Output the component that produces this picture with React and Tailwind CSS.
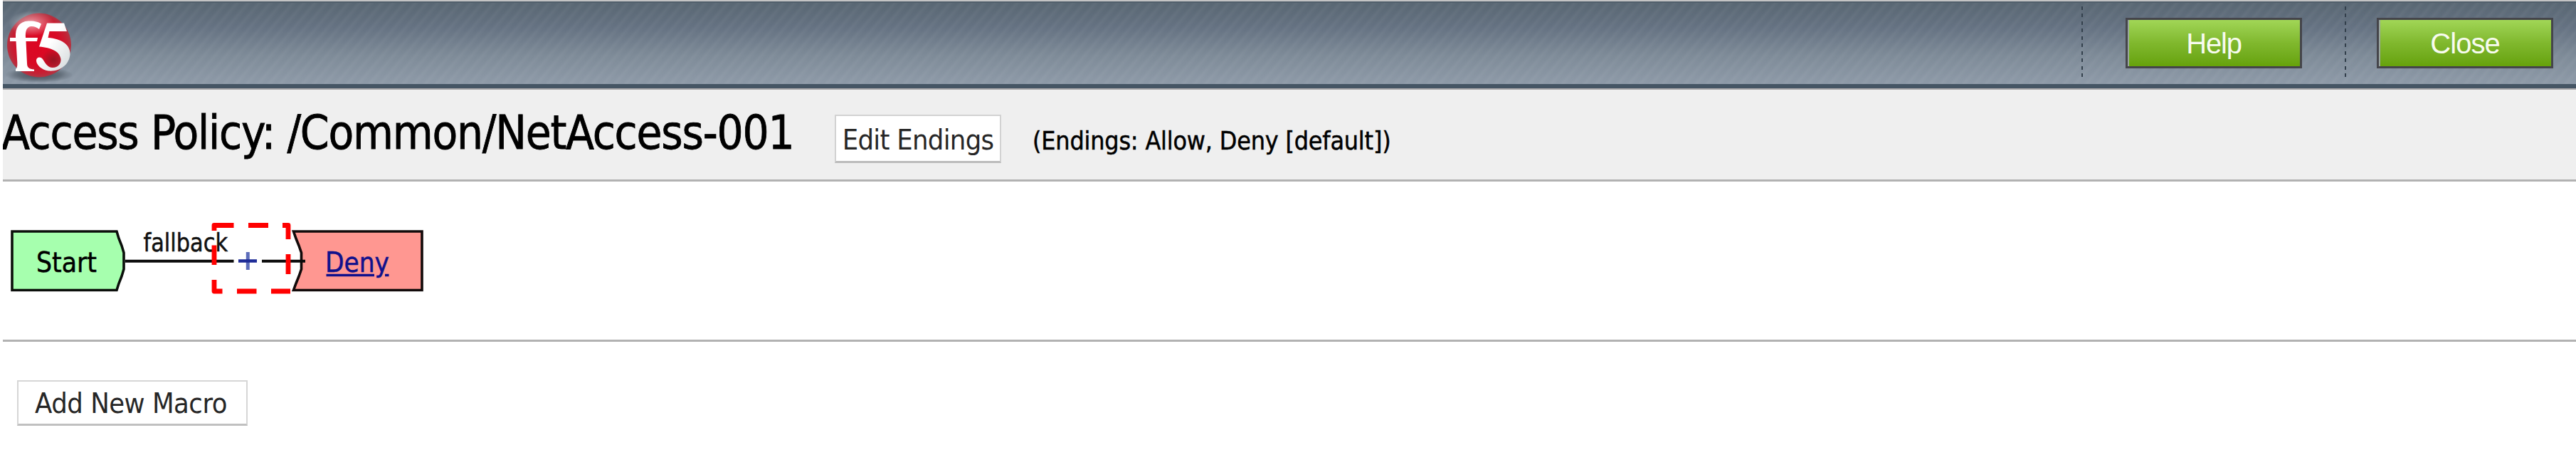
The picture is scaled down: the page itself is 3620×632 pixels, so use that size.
function Logo() {
  return (
    <svg className="block h-[116px] w-[110px]" viewBox="4 3 110 116">
      <defs>
        <radialGradient id="ball" cx="0.5" cy="0.5" r="0.52">
          <stop offset="0" stopColor="#dc0722" />
          <stop offset="0.6" stopColor="#d80a25" />
          <stop offset="0.85" stopColor="#c42235" />
          <stop offset="1" stopColor="#a93c48" />
        </radialGradient>
        <radialGradient id="shine" cx="0.5" cy="0.5" r="0.5">
          <stop offset="0" stopColor="#fff" stopOpacity="0.6" />
          <stop offset="1" stopColor="#fff" stopOpacity="0" />
        </radialGradient>
        <radialGradient id="shade" cx="0.5" cy="0.5" r="0.5">
          <stop offset="0" stopColor="#39434d" stopOpacity="0.85" />
          <stop offset="0.6" stopColor="#39434d" stopOpacity="0.5" />
          <stop offset="1" stopColor="#39434d" stopOpacity="0" />
        </radialGradient>
        <radialGradient id="dark" cx="0.5" cy="0.5" r="0.5">
          <stop offset="0" stopColor="#7a1a22" stopOpacity="0.7" />
          <stop offset="1" stopColor="#7a1a22" stopOpacity="0" />
        </radialGradient>
        <linearGradient id="five" x1="0" y1="0" x2="1" y2="1">
          <stop offset="0.4" stopColor="#ffffff" />
          <stop offset="1" stopColor="#d3d8da" />
        </linearGradient>
      </defs>
      <ellipse cx="55" cy="104" rx="48" ry="11" fill="url(#shade)" />
      <circle cx="55" cy="62.500" r="45" fill="url(#ball)" />
      <ellipse cx="44" cy="32" rx="32" ry="18" fill="url(#shine)" />
      <ellipse cx="75" cy="83" rx="17" ry="15" fill="url(#dark)" />
      <path d="M14 52H22C21 38 27 29 40 28.500C48 28 55 30 58 32.500L55 40C51 37 47 35.500 43.500 36C37 37 35.500 43 36 52H53L52 57H36.500L38 88C38 94 41 96 48 96.500V99H22V96C24 95 24.500 92 24.300 87L22.500 57H14Z" fill="#fff" />
      <path d="M66 31.500H90L94 43H69.500L67.500 52C86 53 99 62 98.500 75C97.500 90 84 100 68 98.500C58 97 51 90 51 84C51 79 57 78 60 82C64 88 67 94 74 94C82 94 86 88 85.500 82C84 71 72 66 55 64.500Z" fill="url(#five)" />
    </svg>
  );
}

function BannerButton({ label, tracking }) {
  return (
    <button className="flex h-[71px] w-[248px] items-center justify-center border-[3px] border-[#45454b] bg-linear-to-b from-[#a1d656] via-[#80b82d] to-[#66a209] font-['Liberation_Sans',Arial,sans-serif] text-[40px] leading-[60px] text-[#f7fbef] shadow-[inset_2px_0_0_#9aa59f]">
      <span className={tracking}>{label}</span>
    </button>
  );
}

function Separator() {
  return (
    <div className="h-[101px] w-[2px] bg-[repeating-linear-gradient(to_bottom,#33404c_0px,#33404c_5px,transparent_5px,transparent_10.5px)]" />
  );
}

function Flow() {
  return (
    <svg
      className="block h-[222px] w-[620px] font-['DejaVu_Sans_Condensed','DejaVu_Sans',sans-serif]"
      viewBox="4 255 620 222"
    >
      <path d="M17 325H164L167 335L171 345L174 355V378L171 388L167 398L164 407.500H17Z" fill="#a6ffae" stroke="#0b0f0b" strokeWidth="3.600" />
      <text x="51" y="382" fontSize="39.500" textLength="85" lengthAdjust="spacingAndGlyphs" stroke="#000" strokeWidth="0.5">Start</text>
      <path d="M412.500 325H593V407.500H412.500L416 398L420 388L423.500 378V355L420 345L416 335Z" fill="#ff9791" stroke="#120a0a" strokeWidth="3.600" />
      <path d="M176 366.700H328.500M368 366.700H429" stroke="#0a0a0a" strokeWidth="4" />
      <path d="M348.300 354V379" stroke="#5c6cba" strokeWidth="5" />
      <path d="M335 366.500H361" stroke="#1c2a96" strokeWidth="4.500" />
      <text x="201.500" y="353" fontSize="35" textLength="118.500" lengthAdjust="spacingAndGlyphs" fill="#111" stroke="#111" strokeWidth="0.5">fallback</text>
      <a>
        <text x="457" y="382" fontSize="39.500" textLength="90" lengthAdjust="spacingAndGlyphs" fill="#10108c" stroke="#10108c" strokeWidth="0.5">Deny</text>
        <path d="M458.500 386.500H526M541 386.500H546.500" stroke="#10108c" strokeWidth="3.500" />
      </a>
      <path
        d="M301 324V316.500H328.500M349 316.500H377M397 316.500H405V336M405 357V385M301 344.500V372M301 393V409H312.500M333 409H360.500M381 409H408"
        fill="none"
        stroke="#ff0000"
        strokeWidth="6.800"
        strokeLinejoin="round"
      />
    </svg>
  );
}

export default function App() {
  return (
    <div className="h-[632px] w-[3620px] overflow-hidden bg-white pl-1 font-['DejaVu_Sans_Condensed','DejaVu_Sans',sans-serif] text-black">
      <header className="h-[126px] border-t-2 border-b-2 border-t-[#c4c4c4] border-b-[#a9a7a9]">
        <div className="flex h-[122px] justify-between border-t-2 border-b-[6px] border-t-[#515f6b] border-b-[#455564] bg-[repeating-linear-gradient(130deg,rgba(255,255,255,0.04)_0px,rgba(255,255,255,0)_5px,rgba(255,255,255,0)_8px,rgba(255,255,255,0.04)_12px),linear-gradient(to_bottom,#596773,#657282_30%,#7e8b98_65%,#8e9aa8)]">
          <Logo />
          <div className="flex pt-[5px] pr-[32px]">
            <Separator />
            <div className="pt-4 pr-[60px] pl-[60px]">
              <BannerButton label="Help" tracking="tracking-[-1.2px]" />
            </div>
            <Separator />
            <div className="pt-4 pl-[43px]">
              <BannerButton label="Close" tracking="tracking-[-1px]" />
            </div>
          </div>
        </div>
      </header>

      <section className="flex h-[129px] items-start overflow-hidden border-b-[3px] border-[#b2b2b2] bg-[#efefef]">
        <h1 className="mt-[21px] w-[1169px] -indent-[2px] text-[65px] leading-[80px] tracking-[-1.25px] whitespace-nowrap [-webkit-text-stroke:0.8px_#000]">
          Access Policy: /Common/NetAccess-001
        </h1>
        <button className="mt-[35px] h-[68px] w-[234px] border-2 border-b-3 border-[#d2d2d2] border-b-[#bcbcbc] bg-white text-[39.500px] leading-[66px] tracking-[-0.7px] whitespace-nowrap text-[#262626]">
          Edit Endings
        </button>
        <span className="mt-[42px] ml-[44px] text-[35.500px] leading-[60px] tracking-[-0.17px] whitespace-nowrap [-webkit-text-stroke:0.5px_#000]">
          (Endings: Allow, Deny [default])
        </span>
      </section>

      <main className="h-[225px] border-b-[3px] border-[#b2b2b2]">
        <Flow />
      </main>

      <footer className="pt-[54px] pl-5">
        <button className="h-[64px] w-[324px] border-2 border-b-3 border-[#d6d6d6] border-b-[#c0c0c0] bg-white pr-1 text-[39.500px] leading-[58px] tracking-[-0.5px] whitespace-nowrap text-[#262626]">
          Add New Macro
        </button>
      </footer>
    </div>
  );
}
